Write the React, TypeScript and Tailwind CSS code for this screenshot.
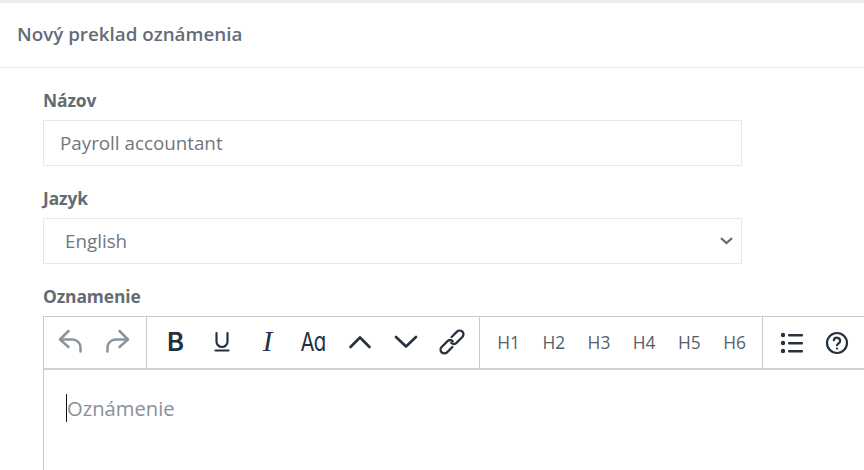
const F = "font-['Open_Sans',sans-serif]";

function Undo({ flip }: { flip?: boolean }) {
  return (
    <svg width="24" height="24" viewBox="0 0 24 24" fill="none" stroke="#8a949e" strokeWidth="2.5" strokeLinecap="round" strokeLinejoin="round" className={flip ? "-scale-x-100" : ""}>
      <path d="M10.5 2 2 10.5l8.5 7.5" />
      <path d="M2.5 10.5h12a8 8 0 0 1 8 8v4" />
    </svg>
  );
}

function Tool({ children, w = "w-[45.2px]" }: { children: React.ReactNode; w?: string }) {
  return <div className={`${w} h-full flex items-center justify-center shrink-0`}>{children}</div>;
}

const dark = "#25313f";

export default function App() {
  const heads = ["H1", "H2", "H3", "H4", "H5", "H6"];
  return (
    <div className={`w-[864px] h-[470px] overflow-hidden bg-white ${F}`}>
      <div className="h-[3px] bg-[#ebedf3]" />
      <div className="h-[65px] border-b border-[#ebedf2] pl-[17px] flex items-center">
        <h1 className="text-[18.8px] font-semibold text-[#646c78] leading-none pb-[2px]">Nový preklad oznámenia</h1>
      </div>
      <div className="pl-[43px] pt-[20px] w-[1000px]">
        <label className="block text-[17.4px] font-bold text-[#646c72] leading-[24px] h-[32px] tracking-[-0.1px]">Názov</label>
        <div className="w-[699px] h-[46px] border border-[#e6e7ea] flex items-center pl-[16px] text-[18.8px] text-[#6f7780]">Payroll accountant</div>
        <label className="block mt-[20px] text-[17.4px] font-bold text-[#646c72] leading-[24px] h-[32px] tracking-[-0.1px]">Jazyk</label>
        <div className="w-[699px] h-[46px] border border-[#e6e7ea] flex items-center justify-between pl-[21px] pr-[8px] text-[18.8px] text-[#6f7780]">
          <span>English</span>
          <svg width="13" height="8" viewBox="0 0 13 8" fill="none" stroke="#646c72" strokeWidth="2.2">
            <path d="M1 1.2 6.5 6l5.5-4.8" />
          </svg>
        </div>
        <label className="block mt-[20px] text-[17.4px] font-bold text-[#646c72] leading-[24px] h-[32px] tracking-[-0.1px]">Oznamenie</label>
        <div className="w-[900px] h-[200px] border border-[#c9cbcc]">
          <div className="h-[53px] border-b-2 border-[#cfd1d2] flex items-center">
            <div className="w-[103px] h-full border-r border-[#c9cbcc] flex items-center justify-center gap-[24px] shrink-0 pr-[2px] pb-[3px]">
              <Undo />
              <Undo flip />
            </div>
            <div className="w-[333px] h-full border-r border-[#c9cbcc] flex items-center pl-[5.5px] pb-[2px] shrink-0">
              <Tool w="w-[46px]"><span className="text-[26px] font-semibold text-[#25313f] leading-none font-['Inter',sans-serif]">B</span></Tool>
              <Tool w="w-[46px]">
                <svg width="18" height="22" viewBox="0 0 18 22" fill="none" stroke={dark} strokeWidth="2.2" strokeLinecap="round">
                  <path d="M3.5 2v8.5a5.5 5.5 0 0 0 11 0V2" />
                  <path d="M2.5 19.5h13" />
                </svg>
              </Tool>
              <Tool w="w-[46px]"><span className="text-[29px] italic text-[#25313f] leading-none font-['Liberation_Serif',serif]">I</span></Tool>
              <Tool w="w-[46px]"><span className="text-[26px] text-[#25313f] leading-none tracking-[-1px] scale-x-[0.78] -translate-x-[1px] font-['Inter',sans-serif]">A&#593;</span></Tool>
              <Tool w="w-[46px]">
                <svg width="24" height="14" viewBox="0 0 24 14" fill="none" stroke={dark} strokeWidth="2.6" strokeLinecap="round" strokeLinejoin="round">
                  <path d="M2.5 12 12 2.5l9.5 9.5" />
                </svg>
              </Tool>
              <Tool w="w-[46px]">
                <svg width="24" height="14" viewBox="0 0 24 14" fill="none" stroke={dark} strokeWidth="2.6" strokeLinecap="round" strokeLinejoin="round">
                  <path d="M2 2l10 9.5L22 2" />
                </svg>
              </Tool>
              <Tool w="w-[46px]">
                <svg width="26" height="26" viewBox="0 0 24 24" fill="none" stroke={dark} strokeWidth="2.1" strokeLinecap="round" strokeLinejoin="round">
                  <g transform="rotate(-45 12 12)">
                    <path d="M9 15.5H2a3.5 3.5 0 0 1 0-7h8a3.5 3.5 0 0 1 3 3.5" />
                    <path d="M15 8.5h7a3.5 3.5 0 0 1 0 7h-8a3.5 3.5 0 0 1-3-3.5" />
                  </g>
                </svg>
              </Tool>
            </div>
            <div className="w-[283px] h-full border-r border-[#c9cbcc] flex items-center pl-[6px] shrink-0">
              {heads.map((h) => (
                <Tool key={h}><span className="text-[17.4px] text-[#56606c] leading-none">{h}</span></Tool>
              ))}
            </div>
            <div className="h-full flex items-center pl-[6px]">
              <Tool>
                <svg width="24" height="22" viewBox="0 0 24 22" fill={dark}>
                  <circle cx="3" cy="3" r="2.2" />
                  <circle cx="3" cy="11" r="2.2" />
                  <circle cx="3" cy="19" r="2.2" />
                  <rect x="8" y="2" width="15" height="2.4" rx="1" />
                  <rect x="8" y="10" width="15" height="2.4" rx="1" />
                  <rect x="8" y="18" width="15" height="2.4" rx="1" />
                </svg>
              </Tool>
              <Tool>
                <svg width="24" height="24" viewBox="0 0 24 24" fill="none" stroke={dark} strokeWidth="2.2" strokeLinecap="round" strokeLinejoin="round">
                  <circle cx="12" cy="12" r="10" />
                  <path d="M8.8 9.2a3.2 3.2 0 0 1 6.3 1c0 2.1-3.1 2.6-3.1 4" />
                  <path d="M12 17.6h.01" />
                </svg>
              </Tool>
            </div>
          </div>
          <div className="pl-[22px] pt-[24px] flex items-center">
            <span className="w-px h-[28px] bg-[#111] -mr-px" />
            <span className="text-[20.2px] text-[#8a9099] leading-[28px] pl-[1px]">Oznámenie</span>
          </div>
        </div>
      </div>
    </div>
  );
}
